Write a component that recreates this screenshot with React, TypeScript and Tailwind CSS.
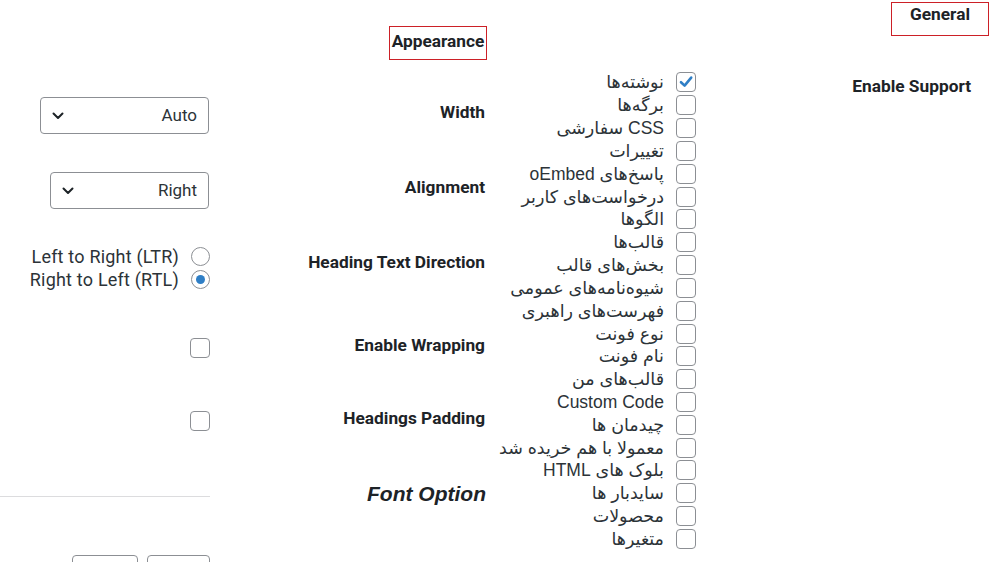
import React from "react";

const items: { t: string; c?: boolean }[] = [
  { t: "نوشته‌ها", c: true },
  { t: "برگه‌ها" },
  { t: "CSS سفارشی" },
  { t: "تغییرات" },
  { t: "پاسخ‌های oEmbed" },
  { t: "درخواست‌های کاربر" },
  { t: "الگوها" },
  { t: "قالب‌ها" },
  { t: "بخش‌های قالب" },
  { t: "شیوه‌نامه‌های عمومی" },
  { t: "فهرست‌های راهبری" },
  { t: "نوع فونت" },
  { t: "نام فونت" },
  { t: "قالب‌های من" },
  { t: "Custom Code" },
  { t: "چیدمان ها" },
  { t: "معمولا با هم خریده شد" },
  { t: "بلوک های HTML" },
  { t: "سایدبار ها" },
  { t: "محصولات" },
  { t: "متغیرها" },
];

function Box({ checked }: { checked?: boolean }) {
  return (
    <span className="w-[20px] h-[20px] rounded-[4px] border border-[#8c8f94] bg-white flex items-center justify-center shrink-0">
      {checked && (
        <svg width="16" height="16" viewBox="0 0 16 16">
          <path d="M3 8.2 L6.6 11.6 L13.2 3.6" fill="none" stroke="#2f7fc6" strokeWidth="2.6" strokeLinecap="round" strokeLinejoin="round" />
        </svg>
      )}
    </span>
  );
}

function Chevron() {
  return (
    <svg width="12" height="8" viewBox="0 0 12 8">
      <path d="M1.5 1.5 L6 6 L10.5 1.5" fill="none" stroke="#1d2327" strokeWidth="2" strokeLinecap="round" strokeLinejoin="round" />
    </svg>
  );
}

function Radio({ checked }: { checked?: boolean }) {
  return (
    <span className="w-[19px] h-[19px] rounded-full border border-[#8c8f94] bg-white flex items-center justify-center shrink-0">
      {checked && <span className="w-[9px] h-[9px] rounded-full bg-[#2f7fc6]" />}
    </span>
  );
}

const label = "text-[17.3px] font-bold leading-[22px] text-[#1d2327] font-['Roboto',sans-serif]";

export default function App() {
  return (
    <div className="w-[1000px] h-[562px] overflow-hidden bg-white flex items-start font-['Roboto',sans-serif] text-[#1d2327]">
      {/* Appearance section */}
      <div className="w-[487px] shrink-0 flex flex-col">
        <div className="self-end mt-[26px] w-[98px] h-[34px] border border-[#cc2027] flex justify-center pt-[3px]">
          <span className={label}>Appearance</span>
        </div>

        {/* Width */}
        <div className="flex justify-between mt-[37px]">
          <div className="w-[210px] flex justify-end pr-[1px]">
            <div className="w-[169px] h-[37px] rounded-[4px] border border-[#8c8f94] flex items-center justify-between pl-[11px] pr-[11px]">
              <Chevron />
              <span className="text-[17px] text-[#2c3338]">Auto</span>
            </div>
          </div>
          <span className={label + " mt-[4px] pr-[2px]"}>Width</span>
        </div>

        {/* Alignment */}
        <div className="flex justify-between mt-[38px]">
          <div className="w-[210px] flex justify-end pr-[1px]">
            <div className="w-[159px] h-[37px] rounded-[4px] border border-[#8c8f94] flex items-center justify-between pl-[11px] pr-[11px]">
              <Chevron />
              <span className="text-[17px] text-[#2c3338]">Right</span>
            </div>
          </div>
          <span className={label + " mt-[4px] pr-[2px]"}>Alignment</span>
        </div>

        {/* Heading Text Direction */}
        <div className="flex justify-between mt-[36px]">
          <div className="w-[210px] flex flex-col items-end">
            <div className="h-[23px] flex items-center gap-[12px]">
              <span className="text-[18px] tracking-[0.2px] text-[#2c3338]">Left to Right (LTR)</span>
              <Radio />
            </div>
            <div className="h-[23px] flex items-center gap-[12px]">
              <span className="text-[18px] tracking-[0.2px] text-[#2c3338]">Right to Left (RTL)</span>
              <Radio checked />
            </div>
          </div>
          <span className={label + " mt-[6px] pr-[2px]"}>Heading Text Direction</span>
        </div>

        {/* Enable Wrapping */}
        <div className="flex justify-between mt-[43px]">
          <div className="w-[210px] flex justify-end pt-[4px]">
            <Box />
          </div>
          <span className={label + " pr-[2px]"}>Enable Wrapping</span>
        </div>

        {/* Headings Padding */}
        <div className="flex justify-between mt-[49px]">
          <div className="w-[210px] flex justify-end pt-[4px]">
            <Box />
          </div>
          <span className={label + " pr-[2px]"}>Headings Padding</span>
        </div>

        {/* Font Option */}
        <div className="flex justify-between mt-[49px]">
          <div className="w-[210px] pt-[16px]">
            <div className="border-t border-[#dcdcde]" />
          </div>
          <span className="text-[21px] font-bold italic leading-[28px] text-[#1d2327] font-['Liberation_Sans',sans-serif] pr-[1px]">
            Font Option
          </span>
        </div>

        {/* Buttons */}
        <div className="w-[210px] flex justify-end gap-[9px] mt-[47px]">
          <div className="w-[66px] h-[32px] rounded-[4px] border border-[#8c8f94] bg-white" />
          <div className="w-[63px] h-[32px] rounded-[4px] border border-[#8c8f94] bg-white" />
        </div>
      </div>

      {/* Checklist */}
      <div className="w-[213px] shrink-0 flex flex-col items-end pr-[4px] pt-[71px] font-['Liberation_Sans','DejaVu_Sans',sans-serif]">
        {items.map((it, i) => (
          <div key={i} className="h-[22.83px] flex items-center gap-[12px]">
            <span dir="rtl" className="text-[17.5px] leading-[22px] text-[#2c3338] whitespace-nowrap">
              {it.t}
            </span>
            <Box checked={it.c} />
          </div>
        ))}
      </div>

      {/* General section */}
      <div className="flex-1 flex flex-col items-end">
        <div className="mr-[11px] mt-[2px] w-[98px] h-[34px] border border-[#cc2027] flex justify-center">
          <span className={label}>General</span>
        </div>
        <span className={label + " mr-[29px] mt-[39px]"}>Enable Support</span>
      </div>
    </div>
  );
}
